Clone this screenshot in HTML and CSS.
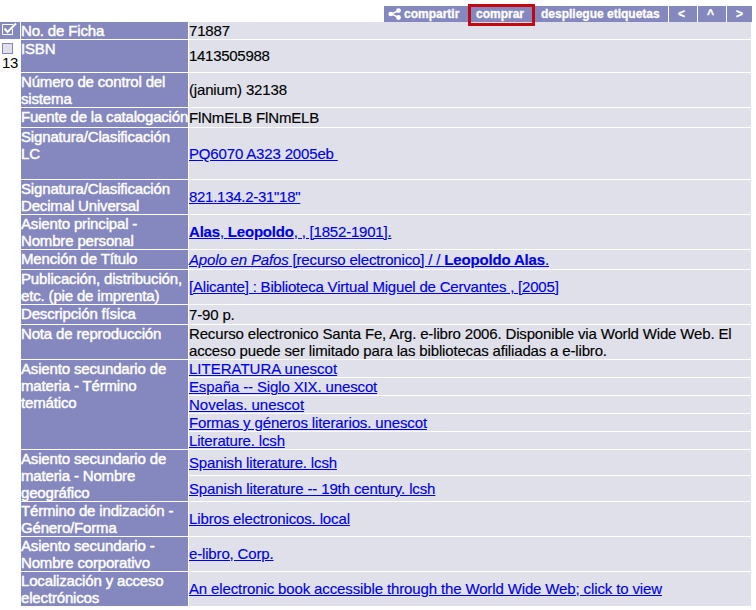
FILE: index.html
```html
<!DOCTYPE html>
<html lang="es">
<head>
<meta charset="utf-8">
<title>Ficha 71887</title>
<link rel="stylesheet" href="styles.css">
</head>
<body>
<nav class="toolbar">
  <a class="tool share"><svg class="share-icon" viewBox="0 0 14 12" width="14" height="12"><path d="M10.5 2.7 3.2 6l7.3 3.4" fill="none" stroke="#fff" stroke-width="1.5"/><circle cx="2.7" cy="6" r="2.3" fill="#fff"/><circle cx="10.5" cy="2.6" r="2.4" fill="#fff"/><circle cx="10.5" cy="9.5" r="2.4" fill="#fff"/></svg><span class="share-text">compartir</span></a>
  <a class="tool buy">comprar</a>
  <a class="tool tags">despliegue etiquetas</a>
  <a class="tool arrow">&lt;</a>
  <a class="tool arrow">^</a>
  <a class="tool arrow last">&gt;</a>
</nav>
<main class="page">
  <aside class="select">
    <div class="select-all"><svg viewBox="0 0 20 17" width="20" height="17"><path d="M13 2.5H2.5v10h10V7" fill="none" stroke="#fff"/><path d="m4.5 6.5 3 3.5L16 1.5" fill="none" stroke="#fff" stroke-width="2"/></svg></div>
    <div class="box"></div>
    <div class="number">13</div>
  </aside>
  <section class="record">
    <div class="row h17"><div class="label">No. de Ficha</div><div class="value">71887</div></div>
    <div class="row h32"><div class="label">ISBN</div><div class="value raised tight">1413505988</div></div>
    <div class="row h34"><div class="label">Número de control del sistema</div><div class="value raised">(janium) 32138</div></div>
    <div class="row h19"><div class="label single">Fuente de la catalogación</div><div class="value">FlNmELB FlNmELB</div></div>
    <div class="row h51"><div class="label">Signatura/Clasificación LC</div><div class="value"><a href="#">PQ6070 A323 2005eb&nbsp;</a></div></div>
    <div class="row h34"><div class="label">Signatura/Clasificación Decimal Universal</div><div class="value raised tight"><a href="#">821.134.2-31"18"</a></div></div>
    <div class="row h34"><div class="label">Asiento principal -<br>Nombre personal</div><div class="value raised snug"><a href="#"><b>Alas</b>, <b>Leopoldo</b>, , [1852-1901].</a></div></div>
    <div class="row h19"><div class="label">Mención de Título</div><div class="value"><a href="#"><i>Apolo en Pafos</i> [recurso electronico] / / <b>Leopoldo Alas</b>.</a></div></div>
    <div class="row h34"><div class="label">Publicación, distribución,<br>etc. (pie de imprenta)</div><div class="value raised snug"><a href="#">[Alicante] : Biblioteca Virtual Miguel de Cervantes , [2005]</a></div></div>
    <div class="row h19"><div class="label">Descripción física</div><div class="value">7-90 p.</div></div>
    <div class="row h34"><div class="label">Nota de reproducción</div><div class="value"><span>Recurso electronico Santa Fe, Arg. e-libro 2006. Disponible via World Wide Web. El<br>acceso puede ser limitado para las bibliotecas afiliadas a e-libro.</span></div></div>
    <div class="row"><div class="label">Asiento secundario de materia - Término temático</div>
      <div class="stack">
        <div class="value h17 natural"><a href="#">LITERATURA unescot</a></div>
        <div class="value h17 loose"><a href="#">España -- Siglo XIX. unescot</a></div>
        <div class="value h17 natural"><a href="#">Novelas. unescot</a></div>
        <div class="value h17 loose"><a href="#">Formas y géneros literarios. unescot</a></div>
        <div class="value h17"><a href="#">Literature. lcsh</a></div>
      </div></div>
    <div class="row"><div class="label">Asiento secundario de materia - Nombre geográfico</div>
      <div class="stack">
        <div class="value h25"><a href="#">Spanish literature. lcsh</a></div>
        <div class="value h25 loose"><a href="#">Spanish literature -- 19th century. lcsh</a></div>
      </div></div>
    <div class="row h34"><div class="label">Término de indización -<br>Género/Forma</div><div class="value raised loose"><a href="#">Libros electronicos. local</a></div></div>
    <div class="row h34"><div class="label">Asiento secundario -<br>Nombre corporativo</div><div class="value raised"><a href="#">e-libro, Corp.</a></div></div>
    <div class="row h34"><div class="label">Localización y acceso electrónicos</div><div class="value raised loose"><a href="#">An electronic book accessible through the World Wide Web; click to view</a></div></div>
  </section>
</main>
</body>
</html>
```
FILE: styles.css
```css
* { box-sizing: border-box; }
body {
  margin: 0;
  padding-top: 6px;
  background: #fff;
  color: #000;
  font: 15px/17px "Liberation Sans", Arial, sans-serif;
}
.toolbar {
  display: flex;
  width: 368px;
  height: 16px;
  margin-left: 384px;
  color: #fff;
  background: #8587bf;
  font-size: 12px;
  font-weight: bold;
  line-height: 16px;
  white-space: nowrap;
}
.tool { flex: none; height: 16px; color: #fff; -webkit-text-stroke: 0.3px #fff; }
.share { display: flex; width: 85px; padding-left: 4px; }
.share-icon { margin: 2px 2px 0 0; }
.buy {
  position: relative;
  width: 66px;
  padding-left: 7px;
}
.buy::after {
  content: "";
  position: absolute;
  inset: -2px 0 -4px -1px;
  border: 3px solid #c5080d;
}
.tags { width: 133px; padding-left: 6px; }
.arrow {
  width: 29px;
  padding-right: 3px;
  border-left: 1px solid #fff;
  text-align: center;
}
.last { width: 26px; padding-right: 0; }
.page { display: flex; gap: 1px; width: 751px; }
.select { width: 20px; }
.select-all { height: 17px; background: #8587bf; }
.select-all svg { display: block; }
.box {
  width: 11px;
  height: 11px;
  margin: 4px 0 0 2px;
  border: 1px solid #8587bf;
  background: #dfe0ea;
}
.number { margin: 0 0 0 2px; letter-spacing: -0.3px; }
.record { display: flex; flex-direction: column; gap: 1px; width: 730px; }
.row { display: grid; grid-template-columns: 167px 562px; gap: 1px; }
.label {
  color: #fff;
  background: #8587bf;
  letter-spacing: -0.16px;
  -webkit-text-stroke: 0.45px #fff;
}
.single { white-space: nowrap; letter-spacing: -0.19px; }
.value {
  display: flex;
  align-items: center;
  background: #dfe0ea;
  letter-spacing: -0.16px;
  white-space: nowrap;
  -webkit-text-stroke: 0.15px currentColor;
}
.raised { padding-bottom: 2px; }
.tight { letter-spacing: -0.28px; }
.snug { letter-spacing: -0.2px; }
.loose { letter-spacing: -0.13px; }
.natural { letter-spacing: 0; }
.stack { display: flex; flex-direction: column; gap: 1px; }
.h17 { height: 17px; }
.h19 { height: 19px; }
.h25 { height: 25px; }
.h32 { height: 32px; }
.h34 { height: 34px; }
.h51 { height: 51px; }
a { color: #0000e6; }
```
